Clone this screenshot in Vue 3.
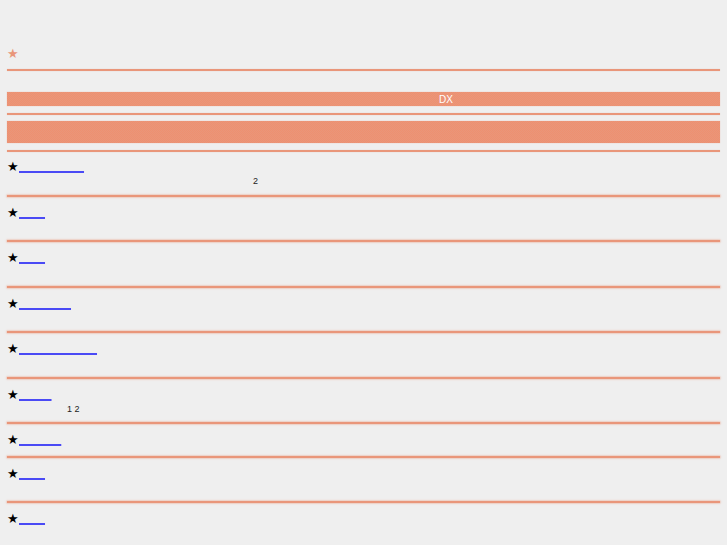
<template>
  <div class="page">
    <header class="top">
      <div class="head-row"><span class="star head-star">★</span></div>
      <div class="rule"></div>
      <div class="bar bar-title"><span class="dx">DX</span></div>
      <div class="rule rule-mid"></div>
      <div class="bar bar-tall"></div>
      <div class="rule rule-mid"></div>
    </header>

    <section
      v-for="(item, index) in items"
      :key="index"
      class="entry"
      :class="{ short: item.short }"
    >
      <div class="entry-body">
        <div class="entry-title">
          <span class="star">★</span><a class="entry-link" href="#">{{ item.blank }}</a>
        </div>
        <div v-if="item.note" class="entry-note" :class="item.noteClass">{{ item.note }}</div>
      </div>
      <div v-if="index < items.length - 1" class="entry-rule"></div>
    </section>
  </div>
</template>

<script setup>
// blank link labels: U+3000 = 13px each, U+2002 / U+2005 for the odd widths
const items = [
  { blank: '\u3000\u3000\u3000\u3000\u3000', note: '2', noteClass: 'note-far' },
  { blank: '\u3000\u3000' },
  { blank: '\u3000\u3000' },
  { blank: '\u3000\u3000\u3000\u3000' },
  { blank: '\u3000\u3000\u3000\u3000\u3000\u3000' },
  { blank: '\u3000\u3000\u2002', note: '1 2', noteClass: 'note-near' },
  { blank: '\u3000\u3000\u3000\u2005', short: true },
  { blank: '\u3000\u3000' },
  { blank: '\u3000\u3000' }
]
</script>

<style>
html,
body {
  background: #efefef;
}
</style>

<style scoped>
.page {
  height: 545px;
  overflow: hidden;
  padding: 0 7px;
  font-family: "Noto Sans CJK JP", "Liberation Sans", sans-serif;
  font-size: 13px;
  color: #000;
}

.top {
  padding-top: 45px;
}

.head-row {
  height: 17px;
  line-height: 16px;
  margin-bottom: 7px;
}

.star {
  display: inline-block;
  width: 12px;
  font-family: "DejaVu Sans", sans-serif;
  font-size: 13px;
  line-height: 16px;
}

.head-star {
  color: #e9967a;
}

.rule {
  height: 2px;
  background: #e9967a;
  box-shadow: 0 0 1px rgba(233, 150, 122, 0.5);
}

.rule-mid {
  margin: 7px 0 6px;
}

.bar {
  background: repeating-conic-gradient(#e9967a 0% 25%, #ee9070 0% 50%) 0 0 / 2px 2px;
  box-shadow: 0 0 1px rgba(233, 150, 122, 0.5);
}

.bar-title {
  height: 14px;
  margin-top: 21px;
  padding-left: 165px;
  text-align: center;
  line-height: 11px;
}

.dx {
  font-family: "Liberation Sans", sans-serif;
  font-size: 10px;
  color: #fff;
}

.bar-tall {
  height: 22px;
}

.rule-mid:last-child {
  margin-bottom: -0.6px;
}

.entry-body {
  height: 43.5px;
  padding-top: 8px;
  box-sizing: border-box;
}

.entry.short .entry-body {
  height: 31.5px;
}

.entry-title {
  display: flex;
  align-items: flex-start;
  height: 15px;
  line-height: 16px;
}

.entry-link {
  color: #4a4af5;
  text-decoration: underline 2px #4a4af5;
  text-underline-offset: -1px;
  white-space: pre;
  line-height: 16px;
}

.entry-note {
  font-family: "Liberation Sans", sans-serif;
  font-size: 9px;
  line-height: 10px;
  margin-top: 2px;
  color: #222;
}

.note-far {
  padding-left: 246px;
}

.note-near {
  padding-left: 60px;
}

.entry-rule {
  height: 2px;
  background: #e9967a;
  box-shadow: 0 0 1.5px 0.5px rgba(233, 150, 122, 0.6);
}
</style>
